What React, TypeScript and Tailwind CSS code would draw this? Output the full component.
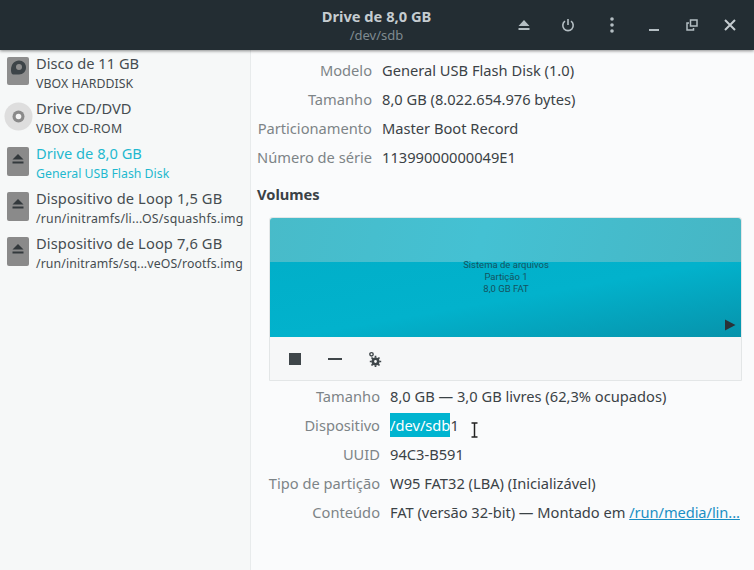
import { FC, ReactNode } from 'react';

const font = { fontFamily: '"Noto Sans", sans-serif' };

const HddIcon: FC = () => (
  <svg width="22" height="29" viewBox="0 0 22 29" className="block">
    <rect x="0" y="0" width="22" height="28" rx="2" fill="#8e8e8e" />
    <path d="M4 13 C4 7 7.5 3.5 12 3.5 C16 3.5 19 6.5 19 10.5 C19 14.5 16 17.5 12 17.5 L6 17.5 C4.5 17.5 4 15 4 13 Z" fill="#3d4448" />
    <circle cx="12" cy="10" r="3" fill="#8e8e8e" />
  </svg>
);

const CdIcon: FC = () => (
  <svg width="29" height="29" viewBox="0 0 29 29" className="block">
    <circle cx="14.5" cy="14.5" r="14" fill="#dedede" />
    <circle cx="14.5" cy="14.5" r="6" fill="#8a8a8a" />
    <circle cx="14.5" cy="14.5" r="2.8" fill="#f4f4f4" />
  </svg>
);

const EjectDisk: FC = () => (
  <svg width="22" height="29" viewBox="0 0 22 29" className="block">
    <rect x="0" y="0" width="22" height="29" rx="2" fill="#8a8a8a" />
    <path d="M11 7 L16.5 12.5 L5.5 12.5 Z" fill="#33393c" />
    <rect x="5.5" y="14.5" width="11" height="2" fill="#33393c" />
  </svg>
);

const drives = [
  { title: 'Disco de 11 GB', sub: 'VBOX HARDDISK', icon: 'hdd', subTrack: 'tracking-[0.08px]' },
  { title: 'Drive CD/DVD', sub: 'VBOX CD-ROM', icon: 'cd', subTrack: 'tracking-[0.18px]' },
  { title: 'Drive de 8,0 GB', sub: 'General USB Flash Disk', icon: 'usb', active: true },
  { title: 'Dispositivo de Loop 1,5 GB', sub: '/run/initramfs/li...OS/squashfs.img', icon: 'loop', subTrack: 'tracking-[0.23px]' },
  { title: 'Dispositivo de Loop 7,6 GB', sub: '/run/initramfs/sq...veOS/rootfs.img', icon: 'loop', subTrack: 'tracking-[0.11px]' },
];

const topRows = [
  ['Modelo', 'General USB Flash Disk (1.0)'],
  ['Tamanho', '8,0 GB (8.022.654.976 bytes)'],
  ['Particionamento', 'Master Boot Record'],
  ['Número de série', '11399000000049E1'],
];

const Row: FC<{ label: string; labelW: string; children: ReactNode }> = ({ label, labelW, children }) => (
  <div className="flex h-[29px] items-center text-[14.67px] whitespace-nowrap">
    <div className={`${labelW} text-right text-[#7d8487]`}>{label}</div>
    <div className="ml-[10px] text-[#3b4246]">{children}</div>
  </div>
);

export default function App() {
  return (
    <div className="flex h-[570px] w-[754px] flex-col overflow-hidden bg-[#fafbfc]" style={font}>
      <header className="z-10 flex h-[50px] shrink-0 items-center bg-[#232d33] shadow-[0_1px_3px_rgba(0,0,0,0.45)]">
        <div className="w-[503px] pl-[250px] pt-[2px] text-center">
          <div className="text-[14.67px] font-bold leading-[19px] text-[#c5ccd0]">Drive de 8,0 GB</div>
          <div className="text-[13px] leading-[19px] text-[#7f8a90]">/dev/sdb</div>
        </div>
        <div className="flex flex-1 items-center pl-[14px]">
          <svg width="14" height="14" viewBox="0 0 14 14" className="mr-[30px]">
            <path d="M7 2 L12.5 8 L1.5 8 Z M1.5 10 H12.5 V12 H1.5 Z" fill="#b4bec3" />
          </svg>
          <svg width="14" height="14" viewBox="0 0 14 14" className="mr-[34px]" fill="none" stroke="#b4bec3" strokeWidth="1.6">
            <path d="M7 1 V7" />
            <path d="M4 3.2 A5.2 5.2 0 1 0 10 3.2" />
          </svg>
          <svg width="6" height="16" viewBox="0 0 6 16" className="mr-[33px]" fill="#b4bec3">
            <circle cx="3" cy="2" r="1.8" />
            <circle cx="3" cy="8" r="1.8" />
            <circle cx="3" cy="14" r="1.8" />
          </svg>
          <svg width="12" height="14" viewBox="0 0 12 14" className="mr-[26px]">
            <rect x="1" y="11" width="10" height="2" fill="#b4bec3" />
          </svg>
          <svg width="12" height="12" viewBox="0 0 12 12" className="mr-[26px]" fill="none" stroke="#b4bec3" strokeWidth="1.5">
            <path d="M4.5 1 H11 V7 H4.5 Z" />
            <path d="M3 4 H1 V11 H7.5 V9" />
          </svg>
          <svg width="12" height="12" viewBox="0 0 12 12" fill="none" stroke="#c5ccd0" strokeWidth="2">
            <path d="M1 1 L11 11 M11 1 L1 11" />
          </svg>
        </div>
      </header>

      <div className="flex flex-1 overflow-hidden">
        <aside className="w-[251px] shrink-0 border-r border-[#e8ebec] bg-[#f6f8f8]">
          {drives.map((d) => (
            <div key={d.title} className="flex h-[45px] items-center whitespace-nowrap">
              <div className="-mt-[3px] flex w-[36px] shrink-0 justify-center">
                {d.icon === 'hdd' && <HddIcon />}
                {d.icon === 'cd' && <CdIcon />}
                {(d.icon === 'usb' || d.icon === 'loop') && <EjectDisk />}
              </div>
              <div className={d.active ? 'text-[#1fb8cf]' : 'text-[#454c50]'}>
                <div className={`text-[14.67px] leading-[22px] ${d.icon === 'loop' ? 'tracking-[0.11px]' : ''}`}>{d.title}</div>
                <div className={`text-[12.3px] leading-[19px] ${d.subTrack ?? ''}`}>{d.sub}</div>
              </div>
            </div>
          ))}
        </aside>

        <main className="relative flex-1 pl-[6px] pt-[5px]">
          {topRows.map(([l, v]) => (
            <Row key={l} label={l} labelW="w-[115px]">{v}</Row>
          ))}
          <div className="mt-[9px] text-[14.67px] font-bold leading-[29px] text-[#3b4246]">Volumes</div>
          <div className="ml-[12px] mt-[8px] w-[473px] rounded-t-[3px] border border-[#e3e6e7] bg-[#f6f7f8]">
            <div className="relative flex h-[119px] flex-col overflow-hidden rounded-t-[3px]">
              <div className="h-[44px] bg-[linear-gradient(105deg,#48bbc9_0%,#44c1d3_45%,#46b6c4_100%)]" />
              <div className="flex-1 bg-[linear-gradient(170deg,#01afc9_0%,#02b2cc_50%,#0793ab_100%)]" />
              <div className="absolute inset-x-0 top-[41px] pl-[1px] text-center text-[9.5px] leading-[12px] text-[#14535f]" style={{ fontFamily: '"Roboto", sans-serif' }}>
                <div>Sistema de arquivos</div>
                <div>Partição 1</div>
                <div>8,0 GB FAT</div>
              </div>
              <svg width="12" height="12" viewBox="0 0 12 12" className="absolute bottom-[6px] right-[5px]">
                <path d="M1 0.5 L11.5 6 L1 11.5 Z" fill="#2a3238" />
              </svg>
            </div>
            <div className="flex h-[43px] items-center pl-[19px]">
              <div className="h-[12px] w-[12px] bg-[#3f464a]" />
              <div className="ml-[27px] h-[2px] w-[14px] bg-[#3f464a]" />
              <svg width="14" height="16" viewBox="0 0 14 16" className="ml-[26px]">
                <circle cx="3.5" cy="3.3" r="1.7" fill="none" stroke="#3f464a" strokeWidth="1.4" />
                <circle cx="7.5" cy="10.5" r="2.7" fill="none" stroke="#3f464a" strokeWidth="2.6" />
                <path d="M7.5 4.8 V16.2 M1.8 10.5 H13.2 M3.5 6.5 L11.5 14.5 M11.5 6.5 L3.5 14.5" stroke="#3f464a" strokeWidth="1.7" strokeDasharray="2 7.4 2 0" />
              </svg>
            </div>
          </div>
          <Row label="Tamanho" labelW="w-[123px]">8,0 GB — 3,0 GB livres (62,3% ocupados)</Row>
          <Row label="Dispositivo" labelW="w-[123px]">
            <span className="bg-[#00b4d0] py-[2px] text-white">/dev/sdb</span>1
          </Row>
          <Row label="UUID" labelW="w-[123px]">94C3-B591</Row>
          <Row label="Tipo de partição" labelW="w-[123px]">W95 FAT32 (LBA) (Inicializável)</Row>
          <Row label="Conteúdo" labelW="w-[123px]">
            <span className="tracking-[-0.03px]">FAT (versão 32-bit) — Montado em </span>
            <span className="tracking-[-0.07px] text-[#1a8fc4] underline">/run/media/lin...</span>
          </Row>
          <svg width="9" height="16" viewBox="0 0 9 16" className="absolute left-[219px] top-[372px]" fill="none">
            <path d="M1.5 1 H7.5 M1.5 15 H7.5 M4.5 1 V15" stroke="#fff" strokeWidth="3" />
            <path d="M1.5 1 H7.5 M1.5 15 H7.5 M4.5 1 V15" stroke="#222" strokeWidth="1.5" />
          </svg>
        </main>
      </div>
    </div>
  );
}
